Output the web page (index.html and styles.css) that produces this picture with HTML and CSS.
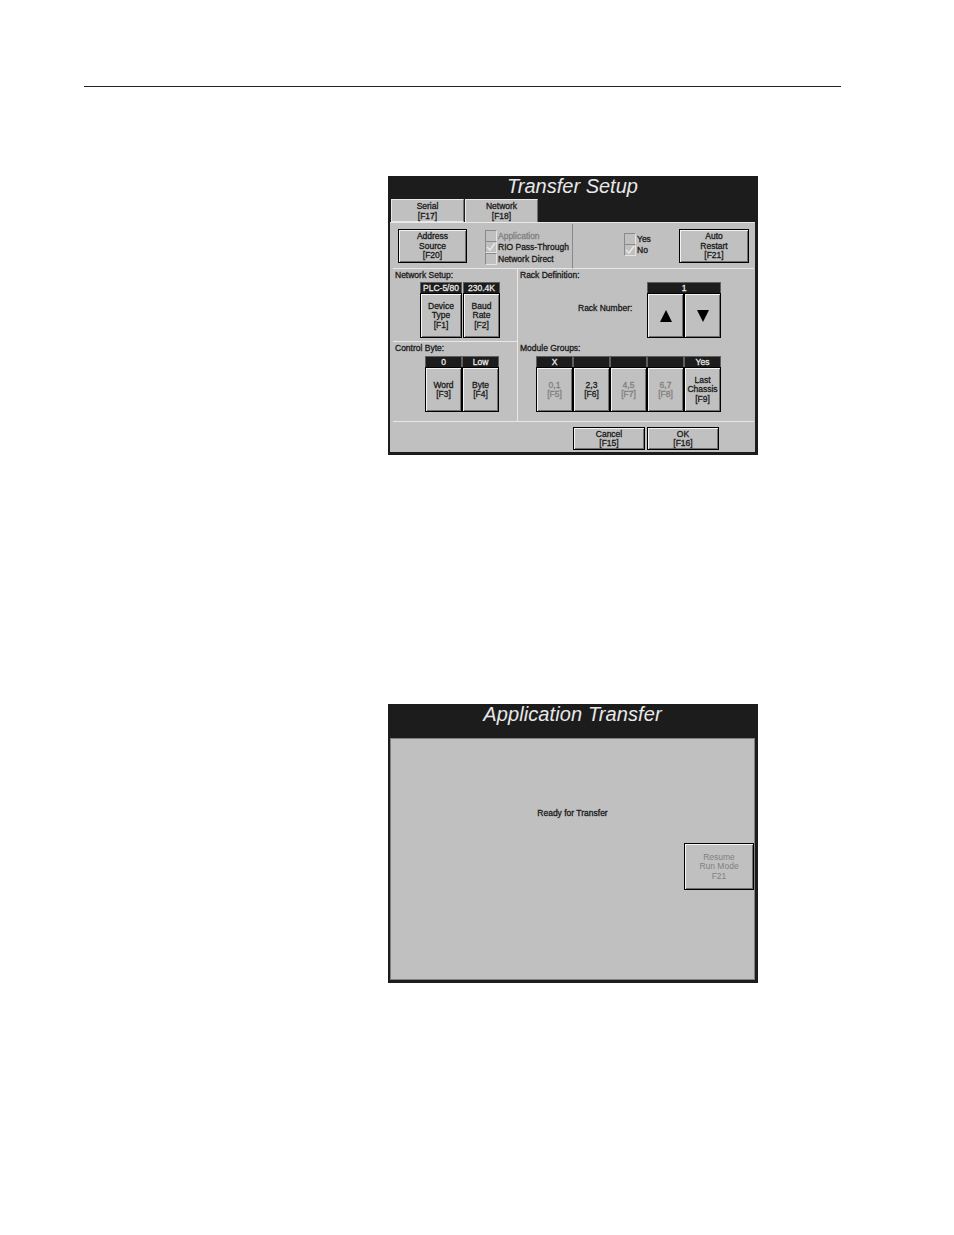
FILE: index.html
```html
<!DOCTYPE html>
<html lang="en">
<head>
  <meta charset="UTF-8" />
  <title>Transfer Setup</title>
  <link rel="stylesheet" href="styles.css">
</head>
<body>
  <div class="page">
    <hr class="rule" />

    <div class="screen first">
      <h1 class="title">Transfer Setup</h1>
      <div class="tabs">
        <div class="tab">Serial<br />[F17]</div>
        <div class="tab active">Network<br />[F18]</div>
      </div>
      <div class="panel">
        <div class="setup">
          <div class="top-left">
            <button class="key address">Address<br />Source<br />[F20]</button>
            <div class="checks">
              <div class="check off"><span class="box"></span>Application</div>
              <div class="check">
                <span class="box">
                  <svg width="10" height="10" viewBox="0 0 10 10"><path d="M1 5 L4 8 L9 1" fill="none" stroke="#e8e8e8" stroke-width="1.5" /></svg>
                </span>RIO Pass-Through
              </div>
              <div class="check"><span class="box"></span>Network Direct</div>
            </div>
          </div>
          <div class="top-right">
            <div class="checks">
              <div class="check"><span class="box"></span>Yes</div>
              <div class="check">
                <span class="box">
                  <svg width="10" height="10" viewBox="0 0 10 10"><path d="M1 5 L4 8 L9 1" fill="none" stroke="#e8e8e8" stroke-width="1.5" /></svg>
                </span>No
              </div>
            </div>
            <button class="key auto">Auto<br />Restart<br />[F21]</button>
          </div>

          <div class="cell network">
            <div class="cell-label">Network Setup:</div>
            <div class="keys">
              <div class="key-col device">
                <div class="readout">PLC-5/80</div>
                <button class="key">Device<br />Type<br />[F1]</button>
              </div>
              <div class="key-col baud">
                <div class="readout">230.4K</div>
                <button class="key">Baud<br />Rate<br />[F2]</button>
              </div>
            </div>
          </div>

          <div class="cell rack">
            <div class="cell-label">Rack Definition:</div>
            <div class="rack-row">
              <div class="rack-label">Rack Number:</div>
              <div class="rack-keys">
                <div class="readout">1</div>
                <div class="keys">
                  <button class="key arrow">
                    <svg width="12" height="12" viewBox="0 0 12 12"><path d="M6 0 L12 12 H0 Z" fill="#000" /></svg>
                  </button>
                  <button class="key arrow">
                    <svg width="12" height="12" viewBox="0 0 12 12"><path d="M0 0 H12 L6 12 Z" fill="#000" /></svg>
                  </button>
                </div>
              </div>
            </div>
          </div>

          <div class="cell control">
            <div class="cell-label">Control Byte:</div>
            <div class="keys">
              <div class="key-col">
                <div class="readout">0</div>
                <button class="key">Word<br />[F3]</button>
              </div>
              <div class="key-col">
                <div class="readout">Low</div>
                <button class="key">Byte<br />[F4]</button>
              </div>
            </div>
          </div>

          <div class="cell module">
            <div class="cell-label">Module Groups:</div>
            <div class="keys">
              <div class="key-col">
                <div class="readout">X</div>
                <button class="key off">0,1<br />[F5]</button>
              </div>
              <div class="key-col">
                <div class="readout"></div>
                <button class="key">2,3<br />[F6]</button>
              </div>
              <div class="key-col">
                <div class="readout"></div>
                <button class="key off">4,5<br />[F7]</button>
              </div>
              <div class="key-col">
                <div class="readout"></div>
                <button class="key off">6,7<br />[F8]</button>
              </div>
              <div class="key-col">
                <div class="readout">Yes</div>
                <button class="key">Last<br />Chassis<br />[F9]</button>
              </div>
            </div>
          </div>
        </div>

        <div class="footer">
          <button class="key wide">Cancel<br />[F15]</button>
          <button class="key wide">OK<br />[F16]</button>
        </div>
      </div>
    </div>

    <div class="screen second">
      <h1 class="title">Application Transfer</h1>
      <div class="panel transfer">
        <div class="ready">Ready for Transfer</div>
        <button class="key off resume">Resume<br />Run Mode<br />F21</button>
      </div>
    </div>
  </div>
</body>
</html>
```

FILE: styles.css
```css
* {
  box-sizing: border-box;
  margin: 0;
  padding: 0;
}

body {
  background-color: white;
  font-family: "Liberation Sans", Arial, sans-serif;
}

.page {
  padding: 86px 0 0 84px;
}

.rule {
  width: 757px;
  height: 1px;
  border: none;
  background-color: #222;
}

/* window */
.screen {
  width: 370px;
  height: 279px;
  margin-left: 304px;
  padding: 0 3px 3px 2px;
  background-color: #1c1c1c;
  display: flex;
  flex-direction: column;
}

.first {
  margin-top: 89px;
}

.second {
  margin-top: 249px;
}

.title {
  color: #e8e8e8;
  font-size: 20px;
  font-weight: normal;
  font-style: italic;
  line-height: 21px;
  text-align: center;
}

.first .title {
  height: 23px;
}

.second .title {
  height: 34px;
  letter-spacing: 0.1px;
}

.tabs {
  display: flex;
  gap: 1px;
  height: 23px;
  padding-left: 1px;
}

.tab {
  width: 73px;
  padding-top: 2px;
  background-color: #c0c0c0;
  border-top: 1px solid #e8e8e8;
  border-left: 1px solid #e8e8e8;
  border-right: 1px solid #707070;
  border-bottom: 1px solid #e8e8e8;
  color: #1a1a1a;
  font-size: 8.5px;
  -webkit-text-stroke: 0.3px;
  line-height: 9.5px;
  text-align: center;
}

.tab.active {
  border-bottom: none;
}

.panel {
  flex: 1;
  background-color: #c0c0c0;
  border-top: 1px solid #e8e8e8;
  color: #1a1a1a;
  font-size: 8.5px;
  -webkit-text-stroke: 0.3px;
}

.setup {
  display: grid;
  grid-template-columns: 125px 236px;
  grid-template-rows: 45px 73px 79px;
  width: 361px;
  margin: 1px 0 0 3px;
  border-bottom: 1px solid #e8e8e8;
  height: 198px;
}

/* top row */
.top-left {
  display: flex;
  width: 180px;
  padding: 5px 0 0 5px;
  gap: 18px;
  border-bottom: 1px solid #e8e8e8;
  border-right: 1px solid #8a8a8a;
}

.top-right {
  display: flex;
  justify-content: flex-end;
  margin-left: 55px;
  padding: 5px 5px 0 0;
  border-bottom: 1px solid #e8e8e8;
}

.checks {
  display: flex;
  flex-direction: column;
  padding-top: 1px;
}

.top-right .checks {
  width: 55px;
  padding-top: 4px;
}

.check {
  display: flex;
  align-items: center;
  gap: 1px;
  height: 11.5px;
  white-space: nowrap;
}

.check.off {
  color: #808080;
}

.box {
  display: block;
  width: 12px;
  height: 12px;
  padding: 1px;
  border: 1px solid;
  border-color: #8a8a8a #e4e4e4 #e4e4e4 #8a8a8a;
  flex-shrink: 0;
}

.box svg {
  display: block;
  margin: -1px;
}

/* keys */
.key {
  display: flex;
  align-items: center;
  justify-content: center;
  height: 45px;
  padding-top: 1px;
  background-color: #c0c0c0;
  border: 1px solid #000;
  box-shadow: inset 1px 1px 0 #f4f4f4, inset -1px -1px 0 #707070;
  color: #1a1a1a;
  font-family: inherit;
  font-size: 8.5px;
  -webkit-text-stroke: 0.3px;
  line-height: 9.5px;
  text-align: center;
}

.key.off {
  color: #808080;
}

.address,
.auto {
  height: 34px;
}

.address {
  width: 69px;
}

.auto {
  width: 70px;
}

.keys {
  display: flex;
}

.key-col {
  display: flex;
  flex-direction: column;
  width: 37px;
}

.key-col .key {
  width: 100%;
}

.device {
  width: 42px;
}

.readout {
  height: 11px;
  background-color: #1c1c1c;
  border: 1px solid #5e5e5e;
  border-bottom: none;
  color: #e8e8e8;
  line-height: 10px;
  text-align: center;
}

/* setup cells */
.cell {
  padding: 1px 0 0 2px;
  border-bottom: 1px solid #e8e8e8;
}

.cell-label {
  height: 11px;
  line-height: 11px;
}

.network {
  border-right: 1px solid #e8e8e8;
}

.control {
  border-right: 1px solid #e8e8e8;
  border-bottom: none;
}

.rack,
.module {
  border-bottom: none;
}

.network .keys {
  padding: 1px 0 0 25px;
  gap: 1px;
}

.control .keys {
  padding: 2px 0 0 30px;
}

.rack-row {
  display: flex;
  align-items: center;
  padding: 1px 0 0 58px;
}

.rack-label {
  width: 69px;
  padding-bottom: 4px;
}

.rack-keys {
  width: 74px;
}

.arrow {
  width: 37px;
  padding-top: 0;
}

.module .keys {
  padding: 2px 0 0 16px;
}

.footer {
  display: flex;
  gap: 2px;
  padding: 5px 0 0 183px;
}

.wide {
  width: 72px;
  height: 23px;
}

/* second window */
.transfer {
  display: flex;
  flex-direction: column;
  border: 1px solid #808080;
}

.ready {
  padding-top: 69px;
  line-height: 10px;
  text-align: center;
}

.resume {
  width: 70px;
  height: 47px;
  margin: 25px 0 0 auto;
  -webkit-text-stroke: 0;
}
```
